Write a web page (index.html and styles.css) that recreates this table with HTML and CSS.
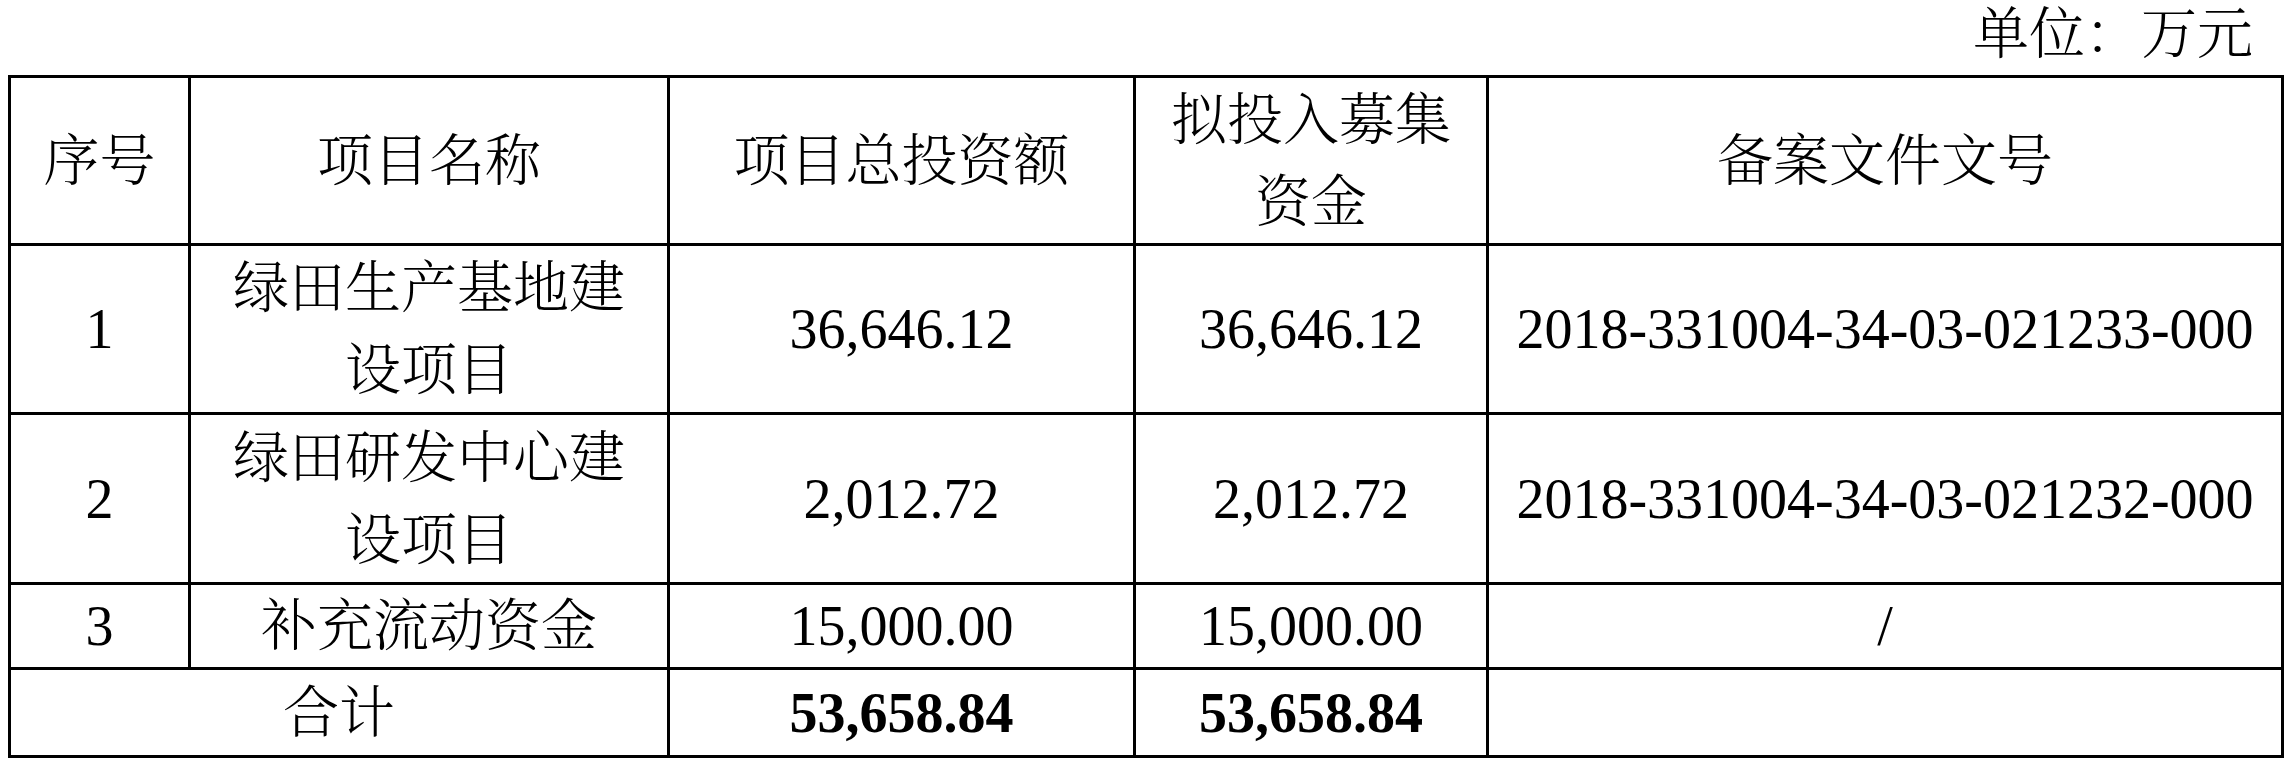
FILE: index.html
```html
<!DOCTYPE html>
<html lang="zh-CN">
<head>
<meta charset="utf-8">
<title>募集资金投资项目</title>
<link rel="stylesheet" href="styles.css">
</head>
<body>
<div class="page">
  <div class="unit">单位：万元</div>
  <table class="fund-table">
    <colgroup>
      <col class="c-no">
      <col class="c-name">
      <col class="c-total">
      <col class="c-raise">
      <col class="c-file">
    </colgroup>
    <thead>
      <tr class="row-head">
        <th>序号</th>
        <th>项目名称</th>
        <th>项目总投资额</th>
        <th>拟投入募集<br>资金</th>
        <th>备案文件文号</th>
      </tr>
    </thead>
    <tbody>
      <tr class="row-tall">
        <td>1</td>
        <td>绿田生产基地建<br>设项目</td>
        <td>36,646.12</td>
        <td>36,646.12</td>
        <td>2018-331004-34-03-021233-000</td>
      </tr>
      <tr class="row-tall2">
        <td>2</td>
        <td>绿田研发中心建<br>设项目</td>
        <td>2,012.72</td>
        <td>2,012.72</td>
        <td>2018-331004-34-03-021232-000</td>
      </tr>
      <tr class="row-short">
        <td>3</td>
        <td>补充流动资金</td>
        <td>15,000.00</td>
        <td>15,000.00</td>
        <td>/</td>
      </tr>
      <tr class="row-sum">
        <td colspan="2">合计</td>
        <td class="strong">53,658.84</td>
        <td class="strong">53,658.84</td>
        <td></td>
      </tr>
    </tbody>
  </table>
</div>
</body>
</html>
```
FILE: styles.css
```css
html, body {
  margin: 0;
  padding: 0;
  background: #ffffff;
}

body {
  color: #000000;
  font-family: "Liberation Serif", "Noto Serif CJK SC", "Noto Sans CJK SC", serif;
  font-size: 56px;
  font-weight: 300;
}

.page {
  width: 2296px;
}

.unit {
  height: 68px;
  line-height: 68px;
  text-align: right;
  padding-right: 43px;
}

.fund-table {
  margin: 7px 0 0 8px;
  width: 2276px;
  table-layout: fixed;
  border-collapse: separate;
  border-spacing: 0;
  border-top: 3px solid #000;
  border-left: 3px solid #000;
}

.c-no { width: 180px; }
.c-name { width: 479px; }
.c-total { width: 466px; }
.c-raise { width: 353px; }
.c-file { width: 795px; }

.fund-table th,
.fund-table td {
  padding: 0;
  border-right: 3px solid #000;
  border-bottom: 3px solid #000;
  text-align: center;
  vertical-align: middle;
  font-weight: 300;
  line-height: 82px;
  white-space: nowrap;
}

.row-head { height: 168px; }
.row-tall { height: 169px; }
.row-tall2 { height: 170px; }
.row-short { height: 85px; }
.row-sum { height: 88px; }

.fund-table .strong {
  font-weight: bold;
}
```
